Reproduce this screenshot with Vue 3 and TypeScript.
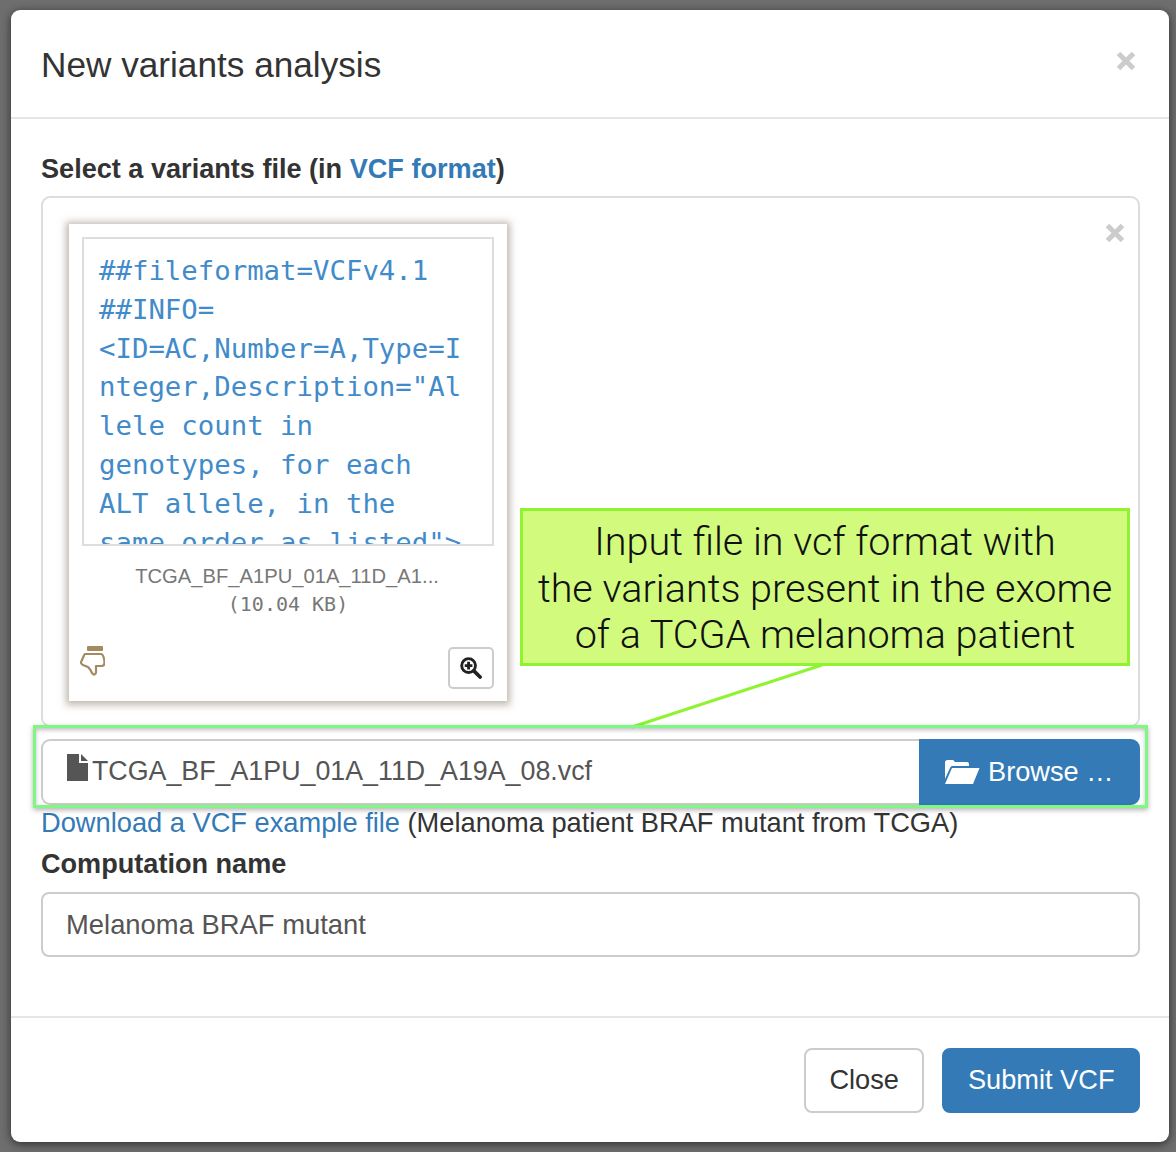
<script setup lang="ts">
const preview = `##fileformat=VCFv4.1
##INFO=
<ID=AC,Number=A,Type=Integer,Description="Allele count in genotypes, for each ALT allele, in the same order as listed">`
</script>

<template>
  <div class="backdrop">
    <div class="modal">
      <div class="modal-header">
        <h4>New variants analysis</h4>
        <span class="close-x">
          <svg width="20" height="20" viewBox="0 0 20 20"><path d="M2.500 2.500 17.500 17.500M17.500 2.500 2.500 17.500" /></svg>
        </span>
      </div>

      <div class="modal-body">
        <label class="label">Select a variants file (in <a>VCF format</a>)</label>

        <div class="dropzone">
          <span class="close-x small">
            <svg width="20" height="20" viewBox="0 0 20 20"><path d="M2.500 2.500 17.500 17.500M17.500 2.500 2.500 17.500" /></svg>
          </span>
          <div class="thumb">
            <div class="preview"><pre>{{ preview }}</pre></div>
            <div class="caption">TCGA_BF_A1PU_01A_11D_A1...</div>
            <div class="size">(10.04 KB)</div>
            <div class="thumb-footer">
              <svg class="thumb-icon" width="26" height="32" viewBox="0 0 26 32">
                <rect x="8" y="1" width="16" height="5" rx="1" fill="#a58a60" />
                <path d="M6 9H22C24 9 25.500 14 25.500 18C25.500 20 24 21 22 21H17V27C17 29.500 15 30 14 29C13 28.500 12.500 27 11.500 25L9 22L4 20C2 19 1.500 17.500 2.500 16L5 10.500C5.300 9.500 5.500 9 6 9Z" fill="none" stroke="#a58a60" stroke-width="2.200" stroke-linejoin="round" />
              </svg>
              <button class="zoom-btn">
                <svg width="23" height="23" viewBox="0 0 24 24">
                  <circle cx="10" cy="10" r="7.200" fill="none" stroke="#222" stroke-width="3" />
                  <path d="M15.500 15.500 22 22" stroke="#222" stroke-width="3.800" stroke-linecap="round" />
                  <path d="M10 6v8M6 10h8" stroke="#222" stroke-width="3" />
                </svg>
              </button>
            </div>
          </div>
        </div>

        <div class="input-group">
          <div class="file-name">
            <svg width="23" height="27" viewBox="0 0 23 27">
              <path d="M1 0h12v9h9v18H1z" fill="#555" />
              <path d="M15 0l7 7h-7z" fill="#555" />
            </svg>
            <span>TCGA_BF_A1PU_01A_11D_A19A_08.vcf</span>
          </div>
          <button class="btn primary browse">
            <svg width="36" height="26" viewBox="0 0 36 26">
              <path d="M1 11V3.500C1 2 2 1 3.500 1h5c1 0 1.500 .6 2 1.500l.5 .5h12c1.500 0 2 1 2 2v2H9c-1.500 0-2.500 .5-3 2L1 20z" fill="#fff" />
              <path d="M8 9h27.500L29 25H1z" fill="#fff" />
            </svg>
            <span>Browse …</span>
          </button>
        </div>

        <div class="example"><a>Download a VCF example file</a> (Melanoma patient BRAF mutant from TCGA)</div>
        <label class="label name-label">Computation name</label>
        <div class="text-input">Melanoma BRAF mutant</div>
      </div>

      <div class="modal-footer">
        <button class="btn">Close</button>
        <button class="btn primary">Submit VCF</button>
      </div>
    </div>

    <!-- annotation laid over the screenshot -->
    <div class="callout">Input file in vcf format with<br />the variants present in the exome<br />of a TCGA melanoma patient</div>
    <svg class="pointer" width="200" height="68" viewBox="0 0 200 68">
      <path d="M192 3 2 65" stroke="#8ef42f" stroke-width="3" fill="none" />
    </svg>
    <div class="highlight"></div>
  </div>
</template>

<style scoped>
.backdrop {
  position: relative;
  box-sizing: border-box;
  width: 1176px;
  height: 1152px;
  padding: 10px 7px 10px 11px;
  background: #6e6e6e;
  font-family: "Liberation Sans", Arial, sans-serif;
  color: #333;
  overflow: hidden;
}
.modal {
  display: flex;
  flex-direction: column;
  height: 1132px;
  background: #fff;
  border-radius: 9px;
  box-shadow: 0 2px 10px rgba(0, 0, 0, 0.6);
}
.modal-header {
  display: flex;
  align-items: center;
  justify-content: space-between;
  box-sizing: border-box;
  height: 109px;
  padding: 0 33px 0 30px;
  border-bottom: 2px solid #e5e5e5;
}
h4 {
  margin: 2px 0 0;
  font-size: 35.200px;
  font-weight: 400;
}
.close-x {
  display: block;
  height: 20px;
  margin-bottom: 6px;
}
.close-x path {
  fill: none;
  stroke: #ccc;
  stroke-width: 5;
}
.close-x.small {
  position: absolute;
  top: 25px;
  right: 13px;
  margin: 0;
}
.modal-body {
  flex: 1;
  padding: 34px 29px 0 30px;
}
.label {
  display: block;
  font-size: 27.100px;
  font-weight: 700;
  line-height: 32px;
}
a {
  color: #337ab7;
}
.dropzone {
  position: relative;
  box-sizing: border-box;
  height: 531px;
  margin-top: 11px;
  padding: 26px;
  border: 2px solid #ddd;
  border-radius: 9px;
}
.thumb {
  display: flex;
  flex-direction: column;
  box-sizing: border-box;
  width: 438px;
  height: 477px;
  padding: 13px;
  background: #fff;
  box-shadow: 0 1px 7px 3px rgba(130, 115, 100, 0.5);
}
.preview {
  box-sizing: border-box;
  height: 309px;
  flex: none;
  padding: 13px 28px 0 15px;
  border: 2px solid #ddd;
  overflow: hidden;
}
pre {
  margin: 0;
  font-family: "DejaVu Sans Mono", monospace;
  font-size: 27.350px;
  line-height: 38.800px;
  color: #428bca;
  white-space: pre-wrap;
  word-wrap: break-word;
}
.caption {
  margin-top: 16px;
  font-size: 20.200px;
  line-height: 28px;
  color: #777;
  text-align: center;
  padding-right: 2px;
}
.size {
  font-family: "DejaVu Sans Mono", monospace;
  font-size: 20px;
  line-height: 28px;
  color: #777;
  text-align: center;
}
.thumb-footer {
  display: flex;
  align-items: flex-end;
  justify-content: space-between;
  flex: 1;
}
.thumb-icon {
  margin: 0 0 11px -3px;
}
.zoom-btn {
  display: flex;
  align-items: center;
  justify-content: center;
  box-sizing: border-box;
  width: 46px;
  height: 42px;
  padding: 0 2px 2px 0;
  background: #fff;
  border: 2px solid #ccc;
  border-radius: 5px;
  margin-bottom: -1px;
}
.input-group {
  display: flex;
  height: 66px;
  margin-top: 12px;
}
.file-name {
  display: flex;
  align-items: center;
  flex: 1;
  padding: 0 0 1px 23px;
  border: 2px solid #ccc;
  border-right: 0;
  border-radius: 9px 0 0 9px;
  font-size: 26.800px;
  color: #555;
}
.file-name svg {
  margin: 0 3px 9px 0;
}
.btn {
  box-sizing: border-box;
  height: 65px;
  padding: 0 23.500px 2px;
  background: #fff;
  border: 2px solid #ccc;
  border-radius: 8px;
  font-family: inherit;
  font-size: 27.200px;
  color: #333;
  white-space: nowrap;
}
.btn.primary {
  background: #337ab7;
  border-color: #337ab7;
  color: #fff;
}
.btn.browse {
  display: flex;
  align-items: center;
  gap: 8px;
  width: 221px;
  height: 66px;
  padding: 0 23px 1px;
  border-radius: 0 9px 9px 0;
}
.browse svg {
  flex: none;
}
.example {
  margin-top: 1px;
  font-size: 27.250px;
  line-height: 34px;
}
.name-label {
  margin-top: 8px;
}
.text-input {
  display: flex;
  align-items: center;
  box-sizing: border-box;
  height: 65px;
  margin-top: 12px;
  padding-left: 23px;
  border: 2px solid #ccc;
  border-radius: 8px;
  font-size: 27.400px;
  color: #555;
}
.modal-footer {
  display: flex;
  justify-content: flex-end;
  gap: 18px;
  box-sizing: border-box;
  height: 126px;
  padding: 30px 29px 0;
  border-top: 2px solid #e5e5e5;
}
.callout {
  position: absolute;
  left: 520px;
  top: 508px;
  box-sizing: border-box;
  width: 610px;
  height: 158px;
  padding-top: 8px;
  background: #d2fb7e;
  border: 3px solid #8ef42f;
  font-family: Roboto, sans-serif;
  font-weight: 300;
  font-size: 39.600px;
  line-height: 46.500px;
  text-align: center;
  color: #111;
}
.pointer {
  position: absolute;
  left: 630px;
  top: 662px;
}
.highlight {
  position: absolute;
  left: 33px;
  top: 725px;
  box-sizing: border-box;
  width: 1115px;
  height: 83px;
  border: 3px solid #7ff782;
  box-shadow: 0 2px 5px rgba(0, 0, 0, 0.3), inset 0 2px 4px rgba(0, 0, 0, 0.25);
}
</style>
